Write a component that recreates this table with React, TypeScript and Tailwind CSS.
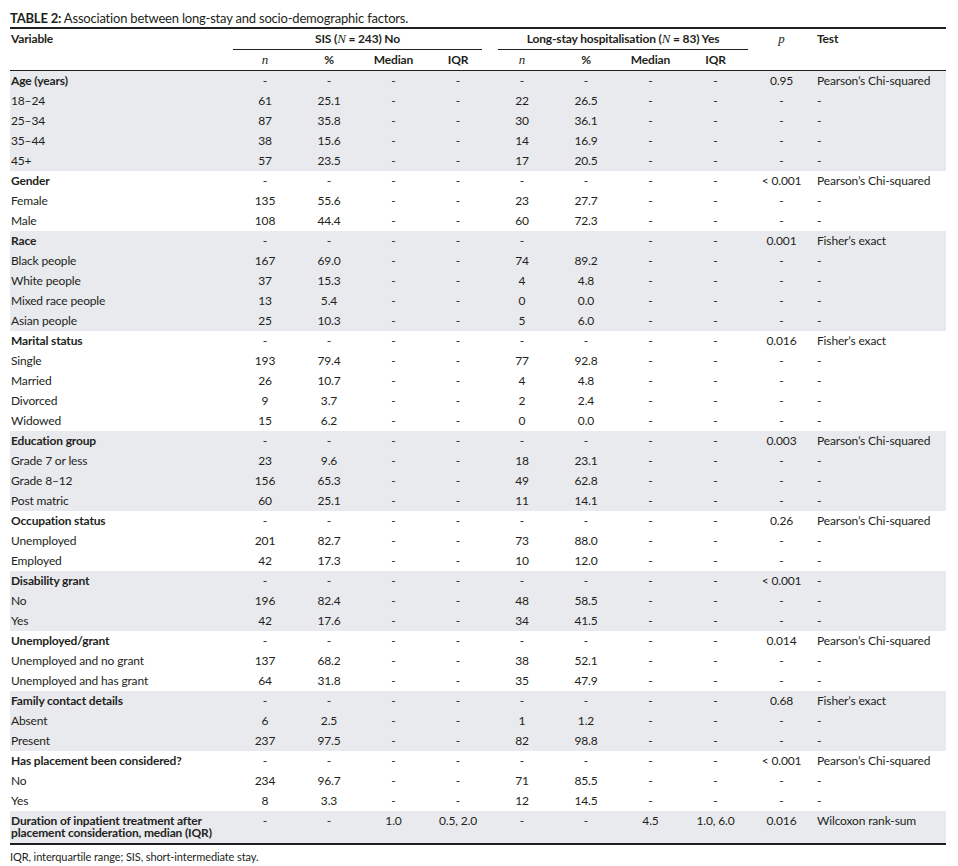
import React from "react";

type Row = {
  label: string;
  bold?: boolean;
  c: string[]; // 10 values: sn, sp, smed, siqr, ln, lp, lmed, liqr, p, test
};

type Group = { shaded: boolean; rows: Row[] };

const d = "-";
const grp = (label: string, p: string, test: string, lp: string = d): Row => ({
  label,
  bold: true,
  c: [d, d, d, d, d, lp, d, d, p, test],
});
const sub = (label: string, sn: string, sp: string, ln: string, lp: string): Row => ({
  label,
  c: [sn, sp, d, d, ln, lp, d, d, d, d],
});

const groups: Group[] = [
  {
    shaded: true,
    rows: [
      grp("Age (years)", "0.95", "Pearson\u2019s Chi-squared"),
      sub("18\u201324", "61", "25.1", "22", "26.5"),
      sub("25\u201334", "87", "35.8", "30", "36.1"),
      sub("35\u201344", "38", "15.6", "14", "16.9"),
      sub("45+", "57", "23.5", "17", "20.5"),
    ],
  },
  {
    shaded: false,
    rows: [
      grp("Gender", "< 0.001", "Pearson\u2019s Chi-squared"),
      sub("Female", "135", "55.6", "23", "27.7"),
      sub("Male", "108", "44.4", "60", "72.3"),
    ],
  },
  {
    shaded: true,
    rows: [
      grp("Race", "0.001", "Fisher\u2019s exact", ""),
      sub("Black people", "167", "69.0", "74", "89.2"),
      sub("White people", "37", "15.3", "4", "4.8"),
      sub("Mixed race people", "13", "5.4", "0", "0.0"),
      sub("Asian people", "25", "10.3", "5", "6.0"),
    ],
  },
  {
    shaded: false,
    rows: [
      grp("Marital status", "0.016", "Fisher\u2019s exact"),
      sub("Single", "193", "79.4", "77", "92.8"),
      sub("Married", "26", "10.7", "4", "4.8"),
      sub("Divorced", "9", "3.7", "2", "2.4"),
      sub("Widowed", "15", "6.2", "0", "0.0"),
    ],
  },
  {
    shaded: true,
    rows: [
      grp("Education group", "0.003", "Pearson\u2019s Chi-squared"),
      sub("Grade 7 or less", "23", "9.6", "18", "23.1"),
      sub("Grade 8\u201312", "156", "65.3", "49", "62.8"),
      sub("Post matric", "60", "25.1", "11", "14.1"),
    ],
  },
  {
    shaded: false,
    rows: [
      grp("Occupation status", "0.26", "Pearson\u2019s Chi-squared"),
      sub("Unemployed", "201", "82.7", "73", "88.0"),
      sub("Employed", "42", "17.3", "10", "12.0"),
    ],
  },
  {
    shaded: true,
    rows: [
      grp("Disability grant", "< 0.001", "-"),
      sub("No", "196", "82.4", "48", "58.5"),
      sub("Yes", "42", "17.6", "34", "41.5"),
    ],
  },
  {
    shaded: false,
    rows: [
      grp("Unemployed/grant", "0.014", "Pearson\u2019s Chi-squared"),
      sub("Unemployed and no grant", "137", "68.2", "38", "52.1"),
      sub("Unemployed and has grant", "64", "31.8", "35", "47.9"),
    ],
  },
  {
    shaded: true,
    rows: [
      grp("Family contact details", "0.68", "Fisher\u2019s exact"),
      sub("Absent", "6", "2.5", "1", "1.2"),
      sub("Present", "237", "97.5", "82", "98.8"),
    ],
  },
  {
    shaded: false,
    rows: [
      grp("Has placement been considered?", "< 0.001", "Pearson\u2019s Chi-squared"),
      sub("No", "234", "96.7", "71", "85.5"),
      sub("Yes", "8", "3.3", "12", "14.5"),
    ],
  },
];

const GRID =
  "grid grid-cols-[223px_64px_64px_65px_64px_64px_64px_65px_65px_67px_131px]";

function Cells({ r }: { r: Row }) {
  return (
    <>
      <div className={`pl-[1px] ${r.bold ? "font-bold" : ""}`}>{r.label}</div>
      {r.c.slice(0, 9).map((v, i) => (
        <div key={i} className="text-center">
          {v}
        </div>
      ))}
      <div className="pl-[2px]">{r.c[9]}</div>
    </>
  );
}

const It = ({ children }: { children: React.ReactNode }) => (
  <span className="italic font-normal font-['Liberation_Serif',serif] text-[13px]">{children}</span>
);

export default function App() {
  return (
    <div className="bg-white w-[958px] h-[866px] text-[#231f20] font-['Lato',sans-serif] text-[12px] tracking-[-0.15px]">
      <div className="ml-[10px] w-[936px]">
        <div className="pt-[10px] h-[27px] text-[13px] leading-[16px] tracking-[-0.2px]">
          <span className="font-bold">TABLE 2:</span> Association between long-stay and socio-demographic factors.
        </div>
        <div className="border-t-2 border-[#231f20]">
          {/* header row 1 */}
          <div className={`${GRID} leading-[20px] font-bold`}>
            <div className="pl-[1px]">Variable</div>
            <div className="col-span-4 text-center border-b border-[#231f20] mr-[8px]">
              SIS (<It>N</It> = 243) No
            </div>
            <div className="col-span-4 text-center border-b border-[#231f20] ml-[8px]">
              Long-stay hospitalisation (<It>N</It> = 83) Yes
            </div>
            <div className="text-center">
              <It>p</It>
            </div>
            <div className="pl-[2px]">Test</div>
          </div>
          {/* header row 2 */}
          <div className={`${GRID} leading-[20px] font-bold border-b border-[#231f20]`}>
            <div></div>
            <div className="text-center"><It>n</It></div>
            <div className="text-center">%</div>
            <div className="text-center">Median</div>
            <div className="text-center">IQR</div>
            <div className="text-center"><It>n</It></div>
            <div className="text-center">%</div>
            <div className="text-center">Median</div>
            <div className="text-center">IQR</div>
            <div></div>
            <div></div>
          </div>
          {groups.map((g, gi) => (
            <div key={gi} className={g.shaded ? "bg-[#e9eaee]" : "bg-white"}>
              {g.rows.map((r, ri) => (
                <div key={ri} className={`${GRID} leading-[20px]`}>
                  <Cells r={r} />
                </div>
              ))}
            </div>
          ))}
          <div className={`${GRID} bg-[#e9eaee] leading-[12px] pt-[4px] pb-[4px] border-b-2 border-[#231f20]`}>
            <div className="pl-[1px] font-bold">
              Duration of inpatient treatment after
              <br />
              placement consideration, median (IQR)
            </div>
            <div className="text-center">-</div>
            <div className="text-center">-</div>
            <div className="text-center">1.0</div>
            <div className="text-center">0.5, 2.0</div>
            <div className="text-center">-</div>
            <div className="text-center">-</div>
            <div className="text-center">4.5</div>
            <div className="text-center">1.0, 6.0</div>
            <div className="text-center">0.016</div>
            <div className="pl-[2px]">Wilcoxon rank-sum</div>
          </div>
        </div>
        <div className="pt-[5px] text-[11px] leading-[14px] tracking-[-0.1px]">
          IQR, interquartile range; SIS, short-intermediate stay.
        </div>
      </div>
    </div>
  );
}
